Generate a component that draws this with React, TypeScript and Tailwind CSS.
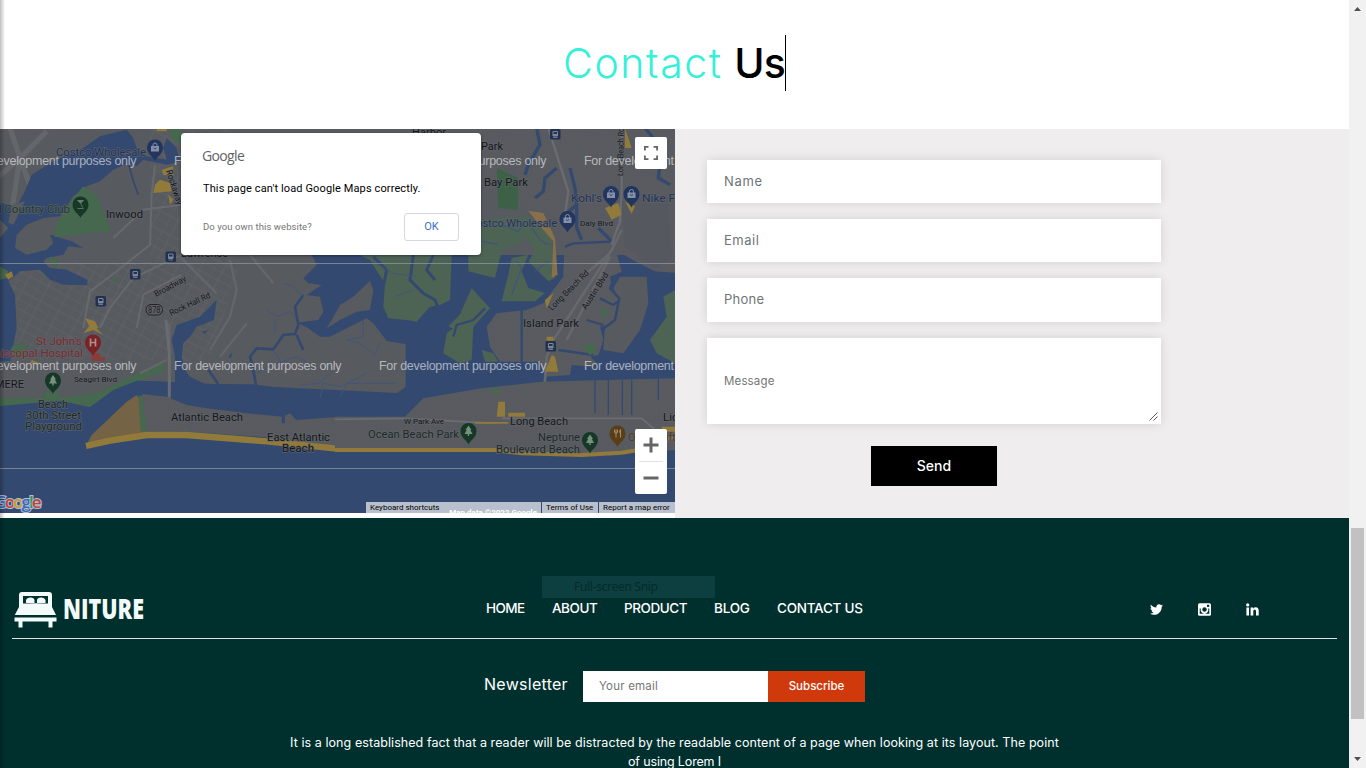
import React from "react";
import { FaTwitter } from "react-icons/fa";

type LabelProps = {
  x: number;
  y: number;
  w: number;
  size?: number;
  fill?: string;
  rotate?: number;
  children: string;
};

function Label({ x, y, w, size = 11.5, fill = "#15171a", rotate = 0, children }: LabelProps) {
  return (
    <text
      x={x}
      y={y}
      textLength={w}
      lengthAdjust="spacingAndGlyphs"
      fontSize={size}
      fill={fill}
      stroke="#62666c"
      strokeWidth={1.4}
      strokeOpacity={0.8}
      paintOrder="stroke"
      transform={rotate ? `rotate(${rotate} ${x} ${y})` : undefined}
    >
      {children}
    </text>
  );
}

function Pin({ x, y, fill, kind }: { x: number; y: number; fill: string; kind: "bag" | "tree" | "hospital" | "golf" | "food" }) {
  return (
    <g transform={`translate(${x} ${y})`}>
      <path d="M0 11.5C-1.2 7.5-8 5-8-2A8 8 0 0 1 8-2C8 5 1.2 7.5 0 11.5Z" fill={fill} />
      {kind === "bag" && (
        <g>
          <rect x={-4} y={-3.5} width={8} height={5.5} fill="#8490a8" />
          <path d="M-2-3v-1.5a2 2 0 0 1 4 0V-3" fill="none" stroke="#8490a8" />
          <path d="M-1.5-1.5q1.5 2 3 0" fill="none" stroke={fill} strokeWidth={0.8} />
        </g>
      )}
      {kind === "tree" && <path d="M0-7.5 3-3H1.8L4 1H.7v2H-.7V1H-4l2.200-4H-3Z" fill="#78907f" />}
      {kind === "hospital" && <path d="M-2.500-6V2M2.500-6V2M-2.500-2h5" stroke="#a99092" strokeWidth={1.7} fill="none" />}
      {kind === "golf" && <path d="M-3-6h6L0-3.500ZM0-4l2 5M-3 2h6" stroke="#6f8275" fill="#6f8275" strokeWidth={0.8} />}
      {kind === "food" && <path d="M-3-6v3q1.500 2 3 0v-3M-1.500-6v8M3-6v8M3-6q-2 2 0 4" stroke="#a08f70" fill="none" />}
    </g>
  );
}

function Station({ x, y }: { x: number; y: number }) {
  return (
    <g transform={`translate(${x - 5} ${y - 5})`}>
      <rect width={10.500} height={10.500} rx={1.500} fill="#22314f" />
      <rect x={2.500} y={2} width={5.500} height={5.500} rx={1.200} fill="#7e869a" />
      <rect x={3.500} y={3} width={3.500} height={2} fill="#22314f" />
      <path d="M3 8.500h4.500" stroke="#7e869a" strokeWidth={0.8} />
    </g>
  );
}

const WATERMARKS = [-31, 174, 379, 584];

function MapDrawing() {
  const water = "#34496f";
  const land = "url(#streets)";
  const marsh = "#4d6455";
  const green = "#45684f";
  const sand = "#927a3a";
  return (
    <svg viewBox="0 129 675 384" className="block h-[384px] w-[675px]" fontFamily="Roboto, 'Liberation Sans', sans-serif">
      <defs>
        <pattern id="streets" width="14" height="9" patternUnits="userSpaceOnUse" patternTransform="rotate(4)">
          <rect width="14" height="9" fill="#575a5f" />
          <path d="M0 0H14M0 0V9" stroke="#62656a" strokeWidth="1" />
        </pattern>
        <pattern id="diagonal" width="21" height="17" patternUnits="userSpaceOnUse" patternTransform="rotate(28)">
          <rect width="21" height="17" fill="#575a5f" />
          <path d="M0 0H21M0 0V17M9 0V17M0 9H21" stroke="#5e6166" strokeWidth="1.200" />
        </pattern>
        <clipPath id="frame">
          <rect x="0" y="129" width="675" height="384" />
        </clipPath>
      </defs>
      <g clipPath="url(#frame)">
        <rect y="129" width="675" height="384" fill="#575a5f" />
        <path d="M0 262H150V129H240V262L210 360H20Z" fill="url(#diagonal)" />

        {/* north-west shore */}
        <g transform="translate(0 128) scale(.33333)">
          <path d="M30 0 60 90 35 250M60 90 140 10M60 90-20 160M60 90 100 200" stroke="#63666b" strokeWidth="16" fill="none" />
          <path d="M0 225 50 235 75 190 95 140 160 100 250 60 300 25 380 5 400 30 410 60 440 85 500 95 490 60 500 30 530 60 540 100 500 110 430 95 410 115 385 105 340 125 300 160 260 175 220 205 180 265 130 270 80 290 50 320 45 360 80 380 140 365 160 345 150 320 215 340 250 360 205 355 190 380 140 390 130 400 150 420 200 425 262 455 262 472 190 470 150 455 120 425 60 430 25 460 45 500 50 600 30 700 0 700Z" fill={water} />
          <path d="M35 230 75 220 40 290 25 285ZM0 275 25 300 0 330Z" fill="#575a5f" />
          <path d="M385 105 400 160 415 200" stroke={water} strokeWidth="5" fill="none" />
          <path d="M250 175 290 200 325 290 330 310 250 318 165 328 165 300 185 265 220 210Z" fill={green} />
          <path d="M150 385 175 400 170 420 150 405ZM505 0H545V50L515 35ZM330 445 350 455 340 465Z" fill={green} />
          <path d="M0 415 25 430 20 450 0 455Z" fill={green} />
          <path d="M15 440 35 430 40 445 25 455Z" fill={sand} />
          <path d="M465 170 480 155 510 165 515 190 460 195ZM485 125 520 115 520 145 490 140ZM505 200 520 215 510 230ZM470 0H500V10H470Z" fill={sand} />
          <path d="M255 570 285 580 295 600 270 600Z" fill={sand} />
          <path d="M250 600 270 490 350 430 450 350 455 200 465 110M300 600 330 540 400 450 545 380M340 330 430 245 545 230M410 600 430 500 545 440" stroke="#66696e" strokeWidth="6" fill="none" />
        </g>

        {/* south shore and open water */}
        <g transform="translate(0 320) scale(.33333)">
          <path d="M0 235 180 235 240 225 300 215 400 165 490 130 495 150 410 185 340 215 270 260 180 242 0 258Z" fill={green} />
          <path d="M40 75 75 70 80 100 60 120 30 90ZM130 215 180 215 180 240H130Z" fill={green} />
          <path d="M0 258 180 242 270 262 340 210 410 182 500 185 2040 260V600H0Z" fill={water} />
          <path d="M275 10 310 45 280 30 250 40ZM95 120 120 130 90 130Z" fill={sand} />
          <path d="M275 100H300V112H315V122H275Z" fill="#8b3b3b" />
        </g>

        {/* central marshes and bay */}
        <g transform="translate(140 240) scale(.33333)">
          <path d="M230 180 222 240 170 260 150 290 130 310 125 350 135 390 150 410 200 434H105V350L95 300 110 255 180 230Z" fill={water} />
          <path d="M515 45H1610V545H840L790 530 620 530 430 522 190 507 90 475 0 460V422L180 432 340 433 430 445 530 475 650 475 770 460 797 440V312L740 303 700 250 680 235 620 265 570 290 540 290 500 262 470 248 535 240 550 215 540 170 500 165 545 135 505 130 490 115 530 75Z" fill={water} />
          <path d="M575 240 600 195 640 170 690 122 700 150 690 210 650 215 600 240 560 265Z" fill="#575a5f" />
          <path d="M660 45 690 60 715 100 735 130 730 200 745 235 800 240 830 245 870 200 900 195 930 180 935 45Z" fill={marsh} />
          <path d="M820 45 810 120 850 160 885 180 895 205M700 50 740 90 730 140M880 45 860 90 885 120" stroke={water} strokeWidth="9" fill="none" />
          <path d="M348 435 340 390 330 350 350 325 400 328 430 285 465 282 475 255 465 200 490 165M470 285 490 330M205 390 235 432" stroke={water} strokeWidth="8" fill="none" strokeLinejoin="round" />
          <path d="M380 210 410 230 450 215 465 230M405 240V280M430 130 460 140 490 170M400 330 425 370M350 400 410 370 470 350 510 370M480 435 540 430 590 380M540 475 550 430 600 440 680 400M670 240V290L620 300 660 310 700 340M600 470 620 430 770 430M720 310 700 350M690 60 760 100 830 110M760 170 820 150" stroke="#435577" strokeWidth="3" fill="none" />
          <path d="M185 275 205 270 195 282ZM265 350 278 335 272 355Z" fill={water} />
          <path d="M88 480V250M0 400 80 360M210 330 270 230 290 150 270 60M240 350 320 250M230 160 120 50M330 45 400 130" stroke="#63666b" strokeWidth="7" fill="none" />
        </g>

        {/* north-east */}
        <g transform="translate(335 128) scale(.33333)">
          <path d="M430 0H610L600 60 570 110 575 180 550 245 490 240 485 200 460 180 430 170Z" fill={land} />
          <path d="M625 0H1025V435L960 430 900 400 850 370 840 330 760 340 690 350 680 300 640 240 590 230 580 150 610 80Z" fill={land} />
          <path d="M690 350 760 340 840 330 850 350 700 470 685 430Z" fill="#575a5f" />
          <path d="M485 120 550 150 548 245 490 240Z" fill="#3d6147" />
          <path d="M437 275 580 265 590 320 560 340 500 370 480 450 400 430V380H437Z" fill={marsh} />
          <path d="M580 380 560 430 580 480 630 495 600 520H500L520 440 530 390Z" fill={marsh} />
          <path d="M590 270 650 330 660 450 640 460 580 400 600 370 580 340Z" fill={marsh} />
          <path d="M580 248 625 255 660 330 668 440 650 450 655 340 620 300Z" fill="#88704a" />
          <path d="M410 485 460 545 400 600 350 600 340 595 390 545Z" fill={marsh} />
          <path d="M605 0 615 50 580 110 570 140M665 120 630 150 625 190 600 210M705 120 720 180 725 230 690 260M725 210 725 300 740 335M790 300 830 340M930 0 980 60 970 150 1005 170" stroke={water} strokeWidth="10" fill="none" />
          <path d="M640 0 700 190 690 260M860 0V190L855 280 830 350M960 220 1005 330" stroke="#696c71" strokeWidth="7" fill="none" />
          <path d="M860 220 1000 210 1010 390 960 420 870 360Z" fill="#55585e" />
          <path d="M810 240 850 225 860 260 830 275ZM870 220 900 235 890 258ZM870 0 890 60 870 60Z" fill={sand} />
          <path d="M500 290 550 310 570 280M440 340 490 350M545 400 560 420 530 500M590 300 620 340 640 350M600 430 640 400" stroke="#40557a" strokeWidth="4" fill="none" />
        </g>

        {/* islands */}
        <g transform="translate(430 230) scale(.33333)">
          <path d="M125 175 180 235 130 290 125 390 90 400 40 370 50 310 75 290 100 230Z" fill={marsh} />
          <path d="M70 320 80 285 130 270 165 235" stroke={water} strokeWidth="7" fill="none" />
          <path d="M155 360 190 370 205 395H165Z" fill={marsh} />
          <path d="M170 290 200 250 290 240 340 220 400 140 405 50 540 40 560 70 575 125 540 140 545 175 565 200 550 280 510 290 520 330 505 375 480 380 500 400 490 410 425 405 420 435 345 440 330 395H210L180 350Z" fill={land} />
          <path d="M570 140 650 140 655 220 630 300 580 370 520 360 525 290 560 260 565 200 550 175Z" fill="#575a5f" />
          <path d="M735 180 700 200 710 260 660 330 680 370 735 400Z" fill={marsh} />
          <path d="M405 50 430 40 540 35M275 240V395M385 360 490 375M510 205 550 225 570 210M470 270 520 285M550 150 540 175 568 205 555 270 515 300" stroke={water} strokeWidth="7" fill="none" />
          <path d="M575 0 545 60 370 330 350 380 340 520 330 570M540 70 400 190M540 80 410 330" stroke="#65686d" strokeWidth="8" fill="none" />
          <path d="M510 240 530 235 530 265 510 255ZM455 350 490 335 500 365 480 375Z" fill={green} />
          <path d="M345 210 370 190 350 235ZM350 320H370V332H350ZM365 375 375 380 385 425 345 425Z" fill={sand} />
        </g>

        {/* barrier beach */}
        <g transform="translate(0 320) scale(.33333)">
          <path d="M262 370 275 345 380 245 410 225 435 260 440 340 350 352Z" fill="#746344" />
          <path d="M415 225 430 230 445 310 440 335 422 335Z" fill={green} />
          <path d="M425 222 500 230 560 255 620 265 740 280 850 290 870 280 890 300 1020 290V385L780 350 560 335 440 335Z" fill={land} />
          <path d="M258 378 330 362 440 345 560 345 800 364 1010 386" stroke={sand} strokeWidth="19" fill="none" />
          <path d="M850 310V285M870 275 890 280 885 295" stroke={water} strokeWidth="9" fill="none" />
          <path d="M498 0 508 100 508 230" stroke="#686b70" strokeWidth="9" fill="none" />
        </g>
        <g transform="translate(335 320) scale(.33333)">
          <path d="M0 290H210L265 235 440 205 620 185 1025 175V390L860 400 740 408 560 400 480 388H0Z" fill={land} />
          <path d="M0 390H480L560 400 740 405 860 398 940 385 1025 345" stroke={sand} strokeWidth="12" fill="none" />
          <path d="M780 180V280M820 180V285M862 180V285M890 180V285M970 175V240" stroke={water} strokeWidth="4" fill="none" />
          <path d="M0 298 210 295 480 310M500 295H920L960 330 1025 335" stroke="#6a6d71" strokeWidth="5" fill="none" />
          <path d="M490 245H510V290H485ZM520 278H570V290H520ZM420 306H520V311H420ZM980 320H1025V335H980Z" fill={sand} />
          <path d="M470 205H495V222H470Z" fill={green} />
        </g>

        {/* place names */}
        <Label x={56} y={156} w={90} fill="#22335a">Costco Wholesale</Label>
        <Label x={-36} y={212.500} w={106} fill="#1e3a2b">Inwood Country Club</Label>
        <Label x={106} y={218} w={37}>Inwood</Label>
        <Label x={181} y={257} w={47}>Lawrence</Label>
        <Label x={412} y={136} w={34}>Harbor</Label>
        <Label x={481} y={150} w={22}>Park</Label>
        <Label x={484} y={186} w={44}>Bay Park</Label>
        <Label x={469} y={227} w={88} fill="#22335a">Costco Wholesale</Label>
        <Label x={571} y={202} w={31} fill="#22335a">Kohl's</Label>
        <Label x={642} y={202} w={66} fill="#22335a">Nike Factory</Label>
        <Label x={580} y={225.500} w={33} size={8}>Daly Blvd</Label>
        <Label x={623} y={176} w={48} size={8.500} rotate={-89}>Long Beach Rd</Label>
        <Label x={166} y={171} w={36} size={9} rotate={72}>Rockaway</Label>
        <Label x={156} y={297} w={35} size={8.500} rotate={-28}>Broadway</Label>
        <Label x={171} y={316} w={44} size={8.500} rotate={-25}>Rock Hall Rd</Label>
        <Label x={552} y={311} w={53} size={8.500} rotate={-45}>Long Beach Rd</Label>
        <Label x={586} y={310} w={42} size={8.500} rotate={-57}>Austin Blvd</Label>
        <Label x={523} y={327} w={56}>Island Park</Label>
        <Label x={36} y={345} w={46} fill="#7b2a2e">St John's</Label>
        <Label x={-12} y={356.500} w={95} fill="#7b2a2e">Episcopal Hospital</Label>
        <Label x={74} y={382} w={43} size={8}>Seagirt Blvd</Label>
        <Label x={-33} y={388} w={57} size={10.500}>EDGEMERE</Label>
        <Label x={38} y={407.500} w={30} fill="#1d2b28">Beach</Label>
        <Label x={26} y={419} w={55} fill="#1d2b28">30th Street</Label>
        <Label x={25} y={430} w={57} fill="#1d2b28">Playground</Label>
        <Label x={171} y={420.500} w={72}>Atlantic Beach</Label>
        <Label x={267} y={440.500} w={63}>East Atlantic</Label>
        <Label x={282} y={451.500} w={32}>Beach</Label>
        <Label x={404} y={424} w={40} size={8}>W Park Ave</Label>
        <Label x={368} y={438} w={91} fill="#1d2b28">Ocean Beach Park</Label>
        <Label x={510} y={424.500} w={58}>Long Beach</Label>
        <Label x={538} y={441} w={42} fill="#1d2b28">Neptune</Label>
        <Label x={496} y={452.500} w={84} fill="#1d2b28">Boulevard Beach</Label>
        <Label x={663} y={421} w={22}>Lido</Label>
        <Label x={628} y={441} w={48} fill="#513a25">Oceansift</Label>

        <rect x="146" y="304.500" width="16.500" height="10.500" rx="5" fill="#5d6065" stroke="#202327" />
        <text x="148" y="313" textLength="12.500" lengthAdjust="spacingAndGlyphs" fontSize="8.500" fill="#202327">878</text>

        <Station x={170.500} y={256.500} />
        <Station x={135} y={274} />
        <Station x={100.500} y={301} />
        <Station x={555} y={134} />
        <Station x={550.500} y={346} />
        <Pin x={155} y={149.500} fill="#22355e" kind="bag" />
        <Pin x={80.500} y={206.500} fill="#163826" kind="golf" />
        <Pin x={611} y={196} fill="#22355e" kind="bag" />
        <Pin x={631.500} y={196} fill="#22355e" kind="bag" />
        <Pin x={567.500} y={221} fill="#22355e" kind="bag" />
        <Pin x={93} y={344.500} fill="#7a2225" kind="hospital" />
        <Pin x={53} y={382.500} fill="#163826" kind="tree" />
        <Pin x={468.500} y={433} fill="#163826" kind="tree" />
        <Pin x={590} y={442} fill="#163826" kind="tree" />
        <Pin x={617.500} y={435.500} fill="#5b3d18" kind="food" />

        <path d="M0 263.500H675M0 468.500H675" stroke="#8e97a5" strokeWidth="1" opacity=".75" />
        {[165, 370].map((y) =>
          WATERMARKS.map((x) => (
            <text key={`${x}-${y}`} x={x} y={y} fontSize="12.500" textLength="167.500" fontFamily="'Liberation Sans', sans-serif" fill="#fff" fillOpacity=".58">
              For development purposes only
            </text>
          ))
        )}
        <text x="-5.500" y="507.500" textLength="47" fontSize="17" fontWeight="600" fontFamily="'Open Sans', sans-serif" stroke="#b4bfd0" strokeWidth="2" paintOrder="stroke">
          <tspan fill="#3867bd">G</tspan><tspan fill="#bd4339">o</tspan><tspan fill="#c59c2d">o</tspan><tspan fill="#3867bd">g</tspan><tspan fill="#349158">l</tspan><tspan fill="#bd4339">e</tspan>
        </text>
      </g>
    </svg>
  );
}

function MapPanel() {
  return (
    <div className="relative h-[384px] w-[675px] overflow-hidden">
      <MapDrawing />
      <div className="absolute left-[181px] top-1 flex h-[122px] w-[300px] flex-col rounded-[4px] bg-white pl-[21px] pr-[22px] shadow-[0_1px_3px_rgba(0,0,0,0.4)]">
        <div className="mt-[14px] h-[18px] font-['Open_Sans',sans-serif] text-[14px] font-medium leading-[18px] tracking-[-0.650px] text-[#5f6368]">Google</div>
        <div className="ml-px mt-[15px] whitespace-nowrap font-[Roboto,sans-serif] text-[11px] leading-[17px] tracking-[0.120px] text-black">This page can't load Google Maps correctly.</div>
        <div className="mt-4 flex items-center justify-between font-[Roboto,sans-serif]">
          <span className="ml-px text-[9.500px] tracking-[0.080px] text-[#757575]">Do you own this website?</span>
          <button className="h-[28px] w-[55px] rounded-[3px] border border-[#d5d8dc] text-[11px] text-[#3f70c9]">OK</button>
        </div>
      </div>
      <button className="absolute left-[635px] top-2 flex size-8 items-center justify-center rounded-[2px] bg-white">
        <svg viewBox="0 0 18 18" className="size-[18px]" fill="#666">
          <path d="M2 2h4.500v1.800H3.800V6.500H2zM11.500 2H16v4.500h-1.800V3.800H11.500zM2 11.500h1.800v2.700h2.700V16H2zM14.200 11.500H16V16h-4.500v-1.800h2.700z" />
        </svg>
      </button>
      <div className="absolute left-[635px] top-[300px] flex h-[65px] w-8 flex-col items-center rounded-[2px] bg-white">
        <svg viewBox="0 0 32 32" className="size-8" fill="#666"><path d="M14.500 8.500h3v6h6v3h-6v6h-3v-6h-6v-3h6z" /></svg>
        <div className="h-px w-6 bg-[#e2e2e2]" />
        <svg viewBox="0 0 32 32" className="size-8" fill="#666"><path d="M8.500 14.500h15v3h-15z" /></svg>
      </div>
      <div className="absolute bottom-0 right-0 flex h-[11px] items-start overflow-hidden whitespace-nowrap font-[Roboto,sans-serif] text-[8px] leading-[11px] text-black">
        <div className="flex h-[11px] w-[175px] justify-between bg-[#b9c0cd] pl-[4px] pr-1">
          <span>Keyboard shortcuts</span>
          <span className="mt-[5px] text-[8px] font-bold text-white">Map data ©2022 Google</span>
        </div>
        <div className="ml-px h-[11px] w-[56px] bg-[#b9c0cd] pl-1">Terms of Use</div>
        <div className="ml-px h-[11px] w-[76px] bg-[#b9c0cd] pl-1">Report a map error</div>
      </div>
    </div>
  );
}

const FIELD = "flex w-[454px] items-center bg-white px-[17px] text-[13px] text-[#6f7479] shadow-[0_0_10px_rgba(0,0,0,0.12)]";

function ContactForm() {
  return (
    <form className="flex flex-1 flex-col bg-[#efedee] pl-8 pt-[31px]">
      <div className={`${FIELD} h-[43px] tracking-[0.700px]`}>Name</div>
      <div className={`${FIELD} mt-4 h-[43px] tracking-[0.500px]`}>Email</div>
      <div className={`${FIELD} mt-4 h-[44px] tracking-[0.250px]`}>Phone</div>
      <div className="relative mt-4 flex h-[86px] w-[454px] items-center bg-white px-[17px] pt-[2px] text-[11.500px] tracking-[0.150px] text-[#757575] shadow-[0_0_10px_rgba(0,0,0,0.12)]">
        Message
        <svg viewBox="0 0 9 9" className="absolute bottom-[3px] right-[3px] size-[9px]" stroke="#555" fill="none">
          <path d="M.5 8.500 8.500.5M4.500 8.500 8.500 4.500" />
        </svg>
      </div>
      <button type="button" className="ml-[164px] mt-[22px] h-10 w-[126px] bg-black pb-[2px] text-[14px] font-medium text-white">Send</button>
    </form>
  );
}

function BedLogo() {
  return (
    <svg viewBox="0 0 43 37" className="h-[37px] w-[43px]" fill="#f2fbfa">
      <path d="M8 1h27a3 3 0 0 1 3 3v12l4 8H.8L5 16V4a3 3 0 0 1 3-3ZM9 5v7.500h25V5Z" fillRule="evenodd" />
      <path d="M12 12V9q1-2.500 4.500-2.500T20.500 9v3ZM23 12V9q.5-2.500 4-2.500T31.500 9v3Z" />
      <path d="M6 14.500Q21.500 10.500 37 14.500V20H6ZM.5 26.500h42v4H38.500v6H34.500v-6h-26v6h-4v-6H.5Z" />
    </svg>
  );
}

function InstagramMark() {
  return (
    <svg viewBox="0 0 13 13" className="size-[13px]">
      <rect width="13" height="12.500" y=".250" rx="1.500" fill="#fff" />
      <path d="M1.700 5.500V10.800H11.300V5.500H10.200A3.900 3.900 0 1 1 2.800 5.500Z" fill="#00302e" />
      <circle cx="6.500" cy="6.500" r="3.300" fill="#fff" />
      <circle cx="6.500" cy="6.500" r="2.200" fill="#00302e" />
      <rect x="9" y="1.700" width="2.200" height="2.200" rx=".4" fill="#00302e" />
    </svg>
  );
}

function LinkedinMark() {
  return (
    <svg viewBox="0 0 13 13" className="size-[13px]" fill="#fff">
      <circle cx="1.700" cy="1.900" r="1.600" />
      <path d="M.4 4.500H3V12.500H.4ZM4.600 4.500H7.200V5.700Q8 4.300 9.700 4.300 12.700 4.300 12.700 7.800V12.500H10V8.300Q10 6.500 8.700 6.500 7.300 6.500 7.300 8.300V12.500H4.600Z" />
    </svg>
  );
}

function Footer() {
  return (
    <footer className="h-[250px] overflow-hidden bg-[#00302e] px-3 text-white">
      <div className="relative flex h-[121px] border-b border-[#dbe5e4] pt-[73px]">
        <div className="flex h-[37px] w-[474px] pl-[2px]">
          <BedLogo />
          <svg viewBox="0 0 82 28" className="ml-[6px] mt-[5px] h-7 w-[82px]">
            <text x="0" y="22.500" textLength="81" lengthAdjust="spacingAndGlyphs" fontFamily="'Open Sans', sans-serif" fontWeight="800" fontSize="27.500" fill="#f2fbfa">NITURE</text>
          </svg>
        </div>
        <nav className="flex pt-[7px] text-[13.500px] font-medium leading-5">
          <a className="w-[66px] tracking-[-0.550px]">HOME</a>
          <a className="w-[72px] tracking-[-0.450px]">ABOUT</a>
          <a className="w-[90px] tracking-[-0.450px]">PRODUCT</a>
          <a className="w-[63px] tracking-[-0.200px]">BLOG</a>
          <a className="w-[373px] tracking-[-0.250px]">CONTACT US</a>
        </nav>
        <div className="flex gap-[35px] pt-[12px]">
          <FaTwitter className="size-[13px]" />
          <InstagramMark />
          <LinkedinMark />
        </div>
        <div className="absolute left-[530px] top-[58px] h-[22px] w-[173px] bg-[#0d3e40] pl-8 font-['Noto_Sans',sans-serif] text-[12px] leading-[22px] tracking-[-0.300px] text-[#052a2b]">Full-screen Snip</div>
      </div>
      <div className="mt-8 flex h-[31px] pl-[472px]">
        <div className="w-[99px] text-[16px] leading-[27px] tracking-[0.280px]">Newsletter</div>
        <div className="w-[185px] bg-white pl-4 text-[11.500px] leading-[31px] tracking-[0.200px] text-[#757575]">Your email</div>
        <button className="w-[97px] bg-[#d0390b] text-[11.500px] font-medium">Subscribe</button>
      </div>
      <p className="mt-[31px] whitespace-nowrap text-center text-[12.500px] leading-[19px] tracking-[0.068px]">
        It is a long established fact that a reader will be distracted by the readable content of a page when looking at its layout. The point
        <br />
        <span className="tracking-[-0.150px]">of using Lorem I</span>
      </p>
    </footer>
  );
}

function Scrollbar() {
  return (
    <div className="flex h-full w-[17px] flex-col items-center bg-[#f1f1f1]">
      <svg viewBox="0 0 17 17" className="size-[17px]" fill="#505050"><path d="M5 11h7L8.500 7z" /></svg>
      <div className="mt-[511px] h-[191px] w-[13px] bg-[#c1c1c1]" />
      <svg viewBox="0 0 17 17" className="mt-auto size-[17px]" fill="#505050"><path d="M5 6h7L8.500 10z" /></svg>
    </div>
  );
}

export default function App() {
  return (
    <div className="relative flex h-[768px] w-[1366px] overflow-hidden bg-white font-[Inter,sans-serif]">
      <main className="w-[1349px]">
        <header className="flex h-[129px] pl-[563px] pt-[35px]">
          <h1 className="flex h-[56px] w-[223px] justify-between whitespace-nowrap border-r border-black text-[41px] leading-[56px]">
            <span className="tracking-[1.600px] text-[#35f0d8] [font-weight:340]">Contact</span>
            <span className="tracking-[-0.800px] text-black [font-weight:480]">Us</span>
          </h1>
        </header>
        <div className="flex h-[389px]">
          <MapPanel />
          <ContactForm />
        </div>
        <Footer />
      </main>
      <Scrollbar />
      <div className="pointer-events-none absolute inset-y-0 left-0 w-[5px] bg-gradient-to-r from-black/25 to-transparent" />
    </div>
  );
}
